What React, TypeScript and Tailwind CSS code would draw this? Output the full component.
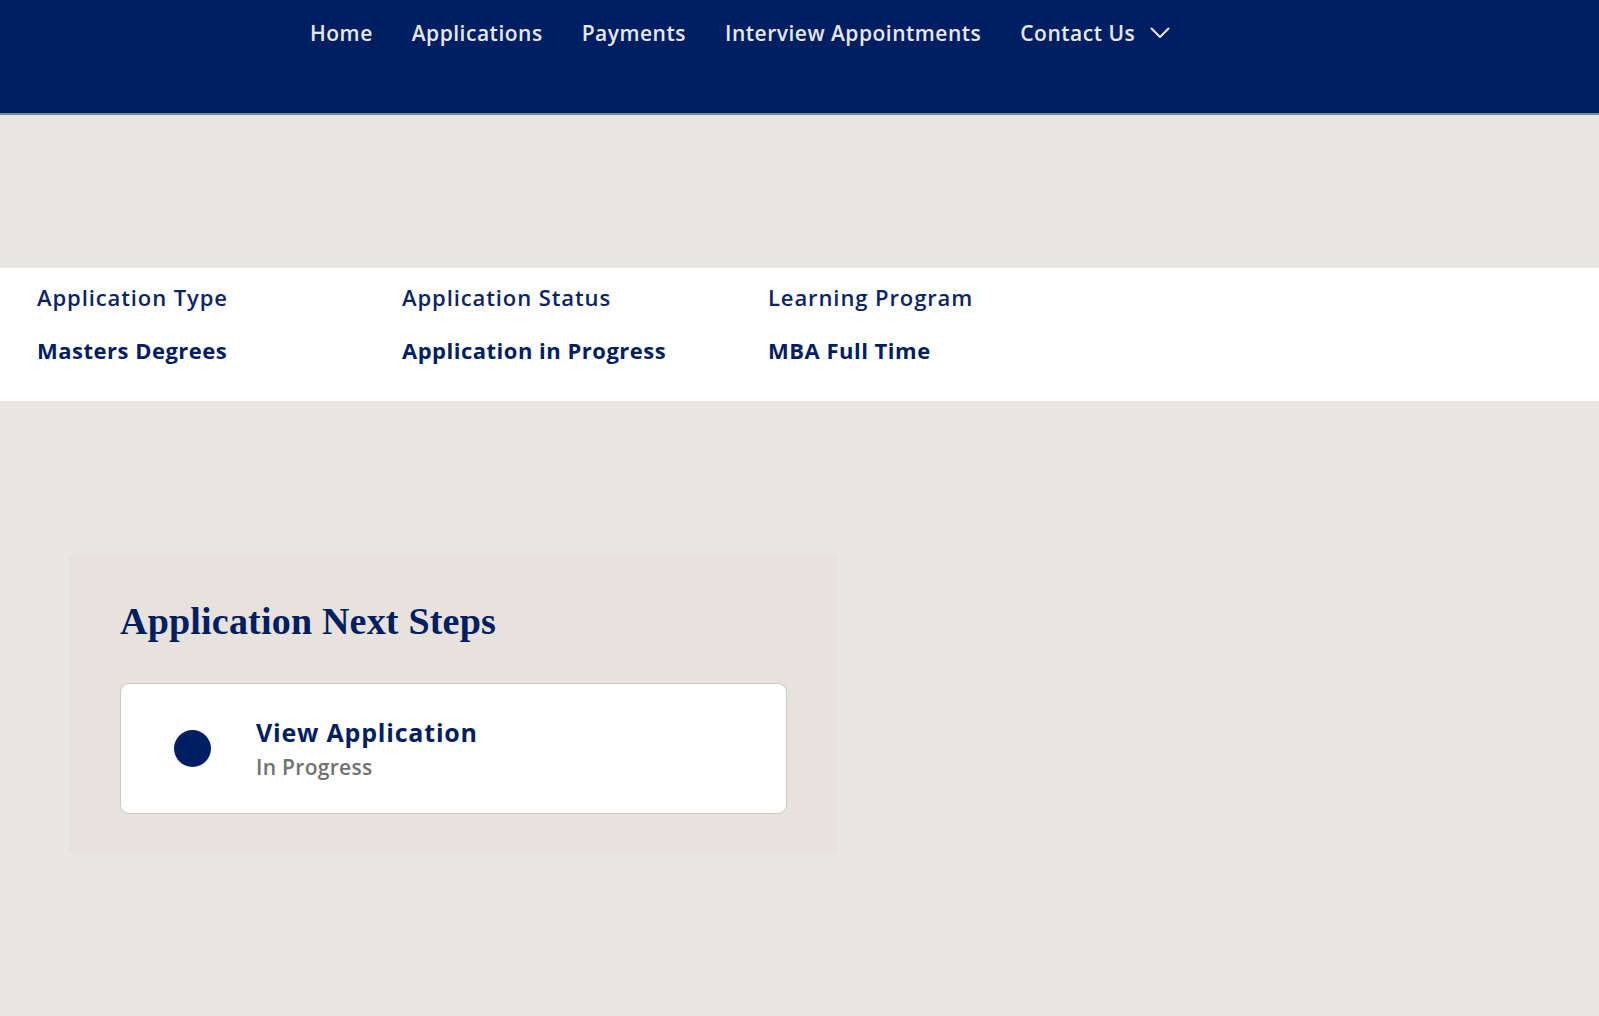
const navItems = ['Home', 'Applications', 'Payments', 'Interview Appointments'];

const summary = [
  { label: 'Application Type', value: 'Masters Degrees' },
  { label: 'Application Status', value: 'Application in Progress' },
  { label: 'Learning Program', value: 'MBA Full Time' },
];

const sans = { fontFamily: '"Open Sans", "Liberation Sans", sans-serif' };

function Chevron() {
  return (
    <svg width="20" height="12" viewBox="0 0 20 12" fill="none" stroke="currentColor" strokeWidth="2" strokeLinecap="round" strokeLinejoin="round">
      <polyline points="1.5,1.5 10,10 18.5,1.5" />
    </svg>
  );
}

export default function App() {
  return (
    <div className="min-h-[1016px] bg-[#EAE6E3]" style={sans}>
      {/* Top navigation */}
      <header className="h-[113px] bg-[#001E62] border-b-2 border-[#7f8a90] box-content">
        <nav className="flex items-center gap-[39px] pl-[310px] pt-[19px] text-[21px] font-semibold tracking-[0.5px] text-[#E6E8EF]">
          {navItems.map((item) => (
            <a key={item} className="leading-[28px]">
              {item}
            </a>
          ))}
          <a className="flex items-center gap-[15px] leading-[28px]">
            Contact Us
            <Chevron />
          </a>
        </nav>
      </header>

      {/* Application summary */}
      <section className="mt-[153px] h-[133px] bg-white">
        <div className="grid grid-cols-[365px_366px_365px] pl-[37px] pt-[14px]">
          {summary.map((s) => (
            <div key={s.label} className="flex flex-col">
              <span className="text-[22px] font-semibold tracking-[0.9px] leading-[30px] text-[#0B2466]">{s.label}</span>
              <span className="mt-[23px] text-[22px] font-bold tracking-[0.5px] leading-[30px] text-[#001E62]">{s.value}</span>
            </div>
          ))}
        </div>
      </section>

      {/* Next steps */}
      <section className="ml-[69px] mt-[154px] w-[769px] bg-[#E7E2DC] px-[51px] pt-[45px] pb-[39px]">
        <h2
          className="text-[38px] font-bold leading-[42px] tracking-[0.2px] text-[#001E62]"
          style={{ fontFamily: '"Liberation Serif", "Times New Roman", serif' }}
        >
          Application Next Steps
        </h2>
        <div className="mt-[41px] flex h-[131px] items-center rounded-[9px] border border-[#cdc8c3] bg-white pl-[53px]">
          <span className="h-[37px] w-[37px] rounded-full bg-[#001E62]" />
          <div className="ml-[45px] flex flex-col">
            <span className="text-[25px] font-bold tracking-[0.8px] leading-[30px] text-[#001E62]">View Application</span>
            <span className="mt-[7px] text-[21px] font-semibold tracking-[0.3px] leading-[26px] text-[#717171]">In Progress</span>
          </div>
        </div>
      </section>
    </div>
  );
}
